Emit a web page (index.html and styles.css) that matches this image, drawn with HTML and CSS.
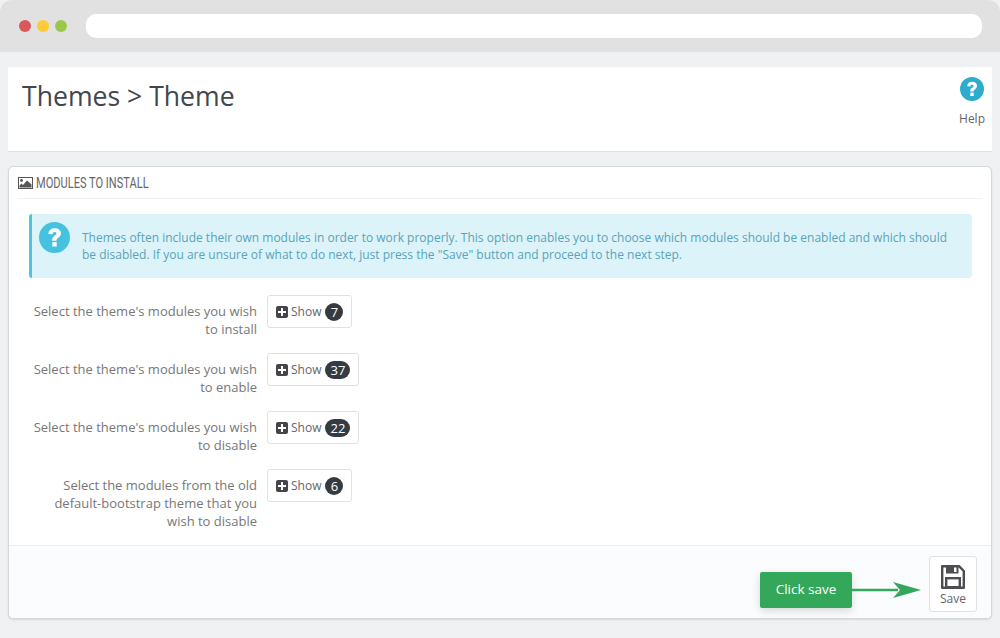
FILE: index.html
```html
<!DOCTYPE html>
<html lang="en">
<head>
  <meta charset="UTF-8">
  <meta name="viewport" content="width=device-width, initial-scale=1.0">
  <title>Themes &gt; Theme</title>
  <link rel="stylesheet" href="styles.css">
</head>
<body>
  <!-- browser chrome -->
  <div class="chrome">
    <div class="dots">
      <span class="dot dot-red"></span>
      <span class="dot dot-yellow"></span>
      <span class="dot dot-green"></span>
    </div>
    <div class="address"></div>
  </div>

  <div class="page">
    <!-- page head -->
    <div class="page-head">
      <h1>Themes &gt; Theme</h1>
      <a class="help">
        <svg class="help-icon" viewBox="0 0 24 24">
          <circle cx="12" cy="12" r="12" fill="#2eacce"/>
          <path d="M7.200 9.200C7.500 6.300 9.500 4.800 12.200 4.800c2.800 0 4.800 1.600 4.800 4 0 1.900-1 2.800-2.200 3.600-1 .7-1.300 1.100-1.300 2.100h-3.300c-.1-1.900.5-2.900 1.800-3.800.9-.6 1.500-1 1.500-1.800 0-.8-.6-1.200-1.400-1.200-1 0-1.500.6-1.700 1.700z" fill="#fff"/>
          <rect x="10.300" y="15.600" width="3.400" height="3.400" fill="#fff"/>
        </svg>
        <span>Help</span>
      </a>
    </div>

    <!-- modules panel -->
    <div class="panel">
      <div class="panel-heading">
        <svg class="picture-icon" viewBox="0 0 15 12">
          <rect x="0.500" y="0.500" width="14" height="11" fill="#fff" stroke="#555"/>
          <circle cx="3.500" cy="3.500" r="1.400" fill="#555"/>
          <path d="M1.500 10.500V8.500L3.500 6.500 5 8 9 3.500 13.500 7.500V10.500z" fill="#555"/>
        </svg>
        <span class="panel-title">MODULES TO INSTALL</span>
      </div>

      <div class="panel-body">
        <div class="alert">
          <svg class="alert-icon" viewBox="0 0 24 24">
            <circle cx="12" cy="12" r="12" fill="#44c2e0"/>
            <path d="M7.200 9.200C7.500 6.300 9.500 4.800 12.200 4.800c2.800 0 4.800 1.600 4.800 4 0 1.900-1 2.800-2.200 3.600-1 .7-1.300 1.100-1.300 2.100h-3.300c-.1-1.900.5-2.900 1.800-3.800.9-.6 1.500-1 1.500-1.800 0-.8-.6-1.200-1.400-1.200-1 0-1.500.6-1.700 1.700z" fill="#fff"/>
            <rect x="10.300" y="15.600" width="3.400" height="3.400" fill="#fff"/>
          </svg>
          <p>Themes often include their own modules in order to work properly. This option enables you to choose which modules should be enabled and which should be disabled. If you are unsure of what to do next, just press the "Save" button and proceed to the next step.</p>
        </div>

        <div class="form-row">
          <label>Select the theme's modules you wish to install</label>
          <button class="show-btn"><span class="plus"></span>Show <span class="badge">7</span></button>
        </div>
        <div class="form-row">
          <label>Select the theme's modules you wish to enable</label>
          <button class="show-btn"><span class="plus"></span>Show <span class="badge">37</span></button>
        </div>
        <div class="form-row">
          <label>Select the theme's modules you wish to disable</label>
          <button class="show-btn"><span class="plus"></span>Show <span class="badge">22</span></button>
        </div>
        <div class="form-row">
          <label>Select the modules from the old default-bootstrap theme that you wish to disable</label>
          <button class="show-btn"><span class="plus"></span>Show <span class="badge">6</span></button>
        </div>
      </div>

      <div class="panel-footer">
        <button class="save-btn">
          <svg class="save-icon" viewBox="0 0 24 24">
            <path d="M1.200 1.200H18L22.800 6V22.800H1.200z" fill="#fff" stroke="#4d4d52" stroke-width="2.400" stroke-linejoin="round"/>
            <rect x="5" y="1" width="12.500" height="7.500" fill="#4d4d52"/>
            <rect x="13" y="2.500" width="2.500" height="4.500" fill="#fff"/>
            <rect x="5.200" y="13.200" width="13.600" height="9" fill="#fff" stroke="#4d4d52" stroke-width="2.400"/>
          </svg>
          <span>Save</span>
        </button>
      </div>

      <!-- annotation over the footer -->
      <div class="callout">Click save</div>
      <svg class="callout-arrow" viewBox="0 0 70 18">
        <path d="M0 9H46" stroke="#34a85a" stroke-width="2.500"/>
        <path d="M41 1L69 9 41 17 48 9z" fill="#34a85a"/>
      </svg>
    </div>
  </div>
</body>
</html>
```

FILE: styles.css
```css
/* page */
body {
  margin: 0;
  height: 638px;
  overflow: hidden;
  background-color: #eff1f3;
  font-family: "Open Sans", sans-serif;
  font-size: 13px;
  color: #666;
}

/* browser chrome */
.chrome {
  height: 52px;
  background-color: #e1e1e1;
  border-radius: 12px 12px 0 0;
  display: flex;
  align-items: center;
  padding: 0 18px 0 19px;
  box-sizing: border-box;
}
.dots {
  display: flex;
  gap: 6px;
  margin-right: 19px;
}
.dot {
  width: 12px;
  height: 12px;
  border-radius: 50%;
}
.dot-red { background-color: #d9595b; }
.dot-yellow { background-color: #fdcb33; }
.dot-green { background-color: #9cc74f; }
.address {
  flex: 1;
  height: 24px;
  background-color: #fff;
  border-radius: 10px;
}

.page {
  padding: 15px 8px 0;
}

/* page head */
.page-head {
  height: 84px;
  background-color: #fff;
  border-bottom: 1px solid #dfe1e3;
  display: flex;
  justify-content: space-between;
  padding: 0 7px 0 14px;
}
.page-head h1 {
  margin: 11px 0 0;
  font-size: 26.6px;
  font-weight: 400;
  line-height: 36px;
  color: #42464d;
}
.help {
  display: flex;
  flex-direction: column;
  align-items: center;
  padding-top: 10px;
  font-size: 12px;
  color: #666;
}
.help-icon {
  width: 24px;
  height: 24px;
  margin-bottom: 9px;
}

/* panel */
.panel {
  position: relative;
  margin-top: 14px;
  height: 453px;
  box-sizing: border-box;
  background-color: #fff;
  border: 1px solid #d3d8db;
  border-radius: 5px;
  box-shadow: 0 1px 2px rgba(0, 0, 0, 0.1);
  display: flex;
  flex-direction: column;
}
.panel-heading {
  flex: none;
  height: 32px;
  box-sizing: border-box;
  margin: 0 9px;
  border-bottom: 1px solid #eff1f2;
  display: flex;
  align-items: center;
  gap: 3px;
  color: #666;
}
.picture-icon {
  width: 15px;
  height: 12px;
}
/* no condensed family installed, so the title is squeezed */
.panel-title {
  display: inline-block;
  font-family: "Roboto", sans-serif;
  font-size: 14px;
  transform: scaleX(0.79);
  transform-origin: left center;
  white-space: nowrap;
}
.panel-body {
  flex: 1;
  min-height: 0;
  padding: 15px 19px 0 20px;
}
.panel-footer {
  flex: none;
  height: 73px;
  box-sizing: border-box;
  background-color: #fbfcfe;
  border-top: 1px solid #eaedef;
  border-radius: 0 0 5px 5px;
  display: flex;
  justify-content: flex-end;
  padding: 10px 14px 0 0;
}

/* info alert */
.alert {
  height: 64px;
  box-sizing: border-box;
  background-color: #dcf4f9;
  border-left: 3px solid #4ac7e0;
  border-radius: 3px;
  display: flex;
  padding: 8px 20px 0 7px;
  margin-bottom: 17px;
}
.alert-icon {
  width: 31px;
  height: 31px;
  flex: none;
  margin-right: 12px;
}
.alert p {
  margin: 0;
  padding-top: 7px;
  font-size: 12px;
  line-height: 17px;
  color: #5aa3b8;
}

/* form rows */
.form-row {
  display: flex;
  align-items: flex-start;
  margin-bottom: 15px;
}
.form-row label {
  width: 228px;
  padding-top: 7px;
  margin-right: 10px;
  text-align: right;
  line-height: 18px;
  font-size: 13px;
  color: #777;
}
.show-btn {
  height: 33px;
  box-sizing: border-box;
  background-color: #fff;
  border: 1px solid #dfe1e3;
  border-radius: 3px;
  padding: 0 8px;
  display: flex;
  align-items: center;
  font-family: inherit;
  font-size: 12px;
  color: #666;
}
.plus {
  position: relative;
  width: 12px;
  height: 12px;
  margin-right: 3px;
  background-color: #44444a;
  border-radius: 2px;
}
.plus::before,
.plus::after {
  content: "";
  position: absolute;
  background-color: #fff;
}
.plus::before {
  left: 2px;
  top: 5px;
  width: 8px;
  height: 2px;
}
.plus::after {
  left: 5px;
  top: 2px;
  width: 2px;
  height: 8px;
}
.badge {
  margin-left: 4px;
  min-width: 18px;
  height: 18px;
  box-sizing: border-box;
  padding: 0 5px;
  border-radius: 9px;
  background-color: #363a41;
  color: #fff;
  font-size: 13px;
  font-weight: 400;
  line-height: 18px;
  text-align: center;
}

/* save button */
.save-btn {
  width: 48px;
  height: 56px;
  box-sizing: border-box;
  background-color: #fff;
  border: 1px solid #dfe1e3;
  border-radius: 3px;
  padding: 8px 0 0;
  display: flex;
  flex-direction: column;
  align-items: center;
  font-family: inherit;
  font-size: 12px;
  color: #666;
}
.save-icon {
  width: 24px;
  height: 24px;
  margin-bottom: 1px;
}

/* annotation */
.callout {
  position: absolute;
  left: 751px;
  top: 405px;
  width: 92px;
  height: 36px;
  border-radius: 2px;
  background-color: #34a85a;
  box-shadow: 0 3px 8px rgba(0, 0, 0, 0.15);
  color: #fff;
  font-size: 13.500px;
  line-height: 34px;
  text-align: center;
}
.callout-arrow {
  position: absolute;
  left: 843px;
  top: 414px;
  width: 70px;
  height: 18px;
}
```
